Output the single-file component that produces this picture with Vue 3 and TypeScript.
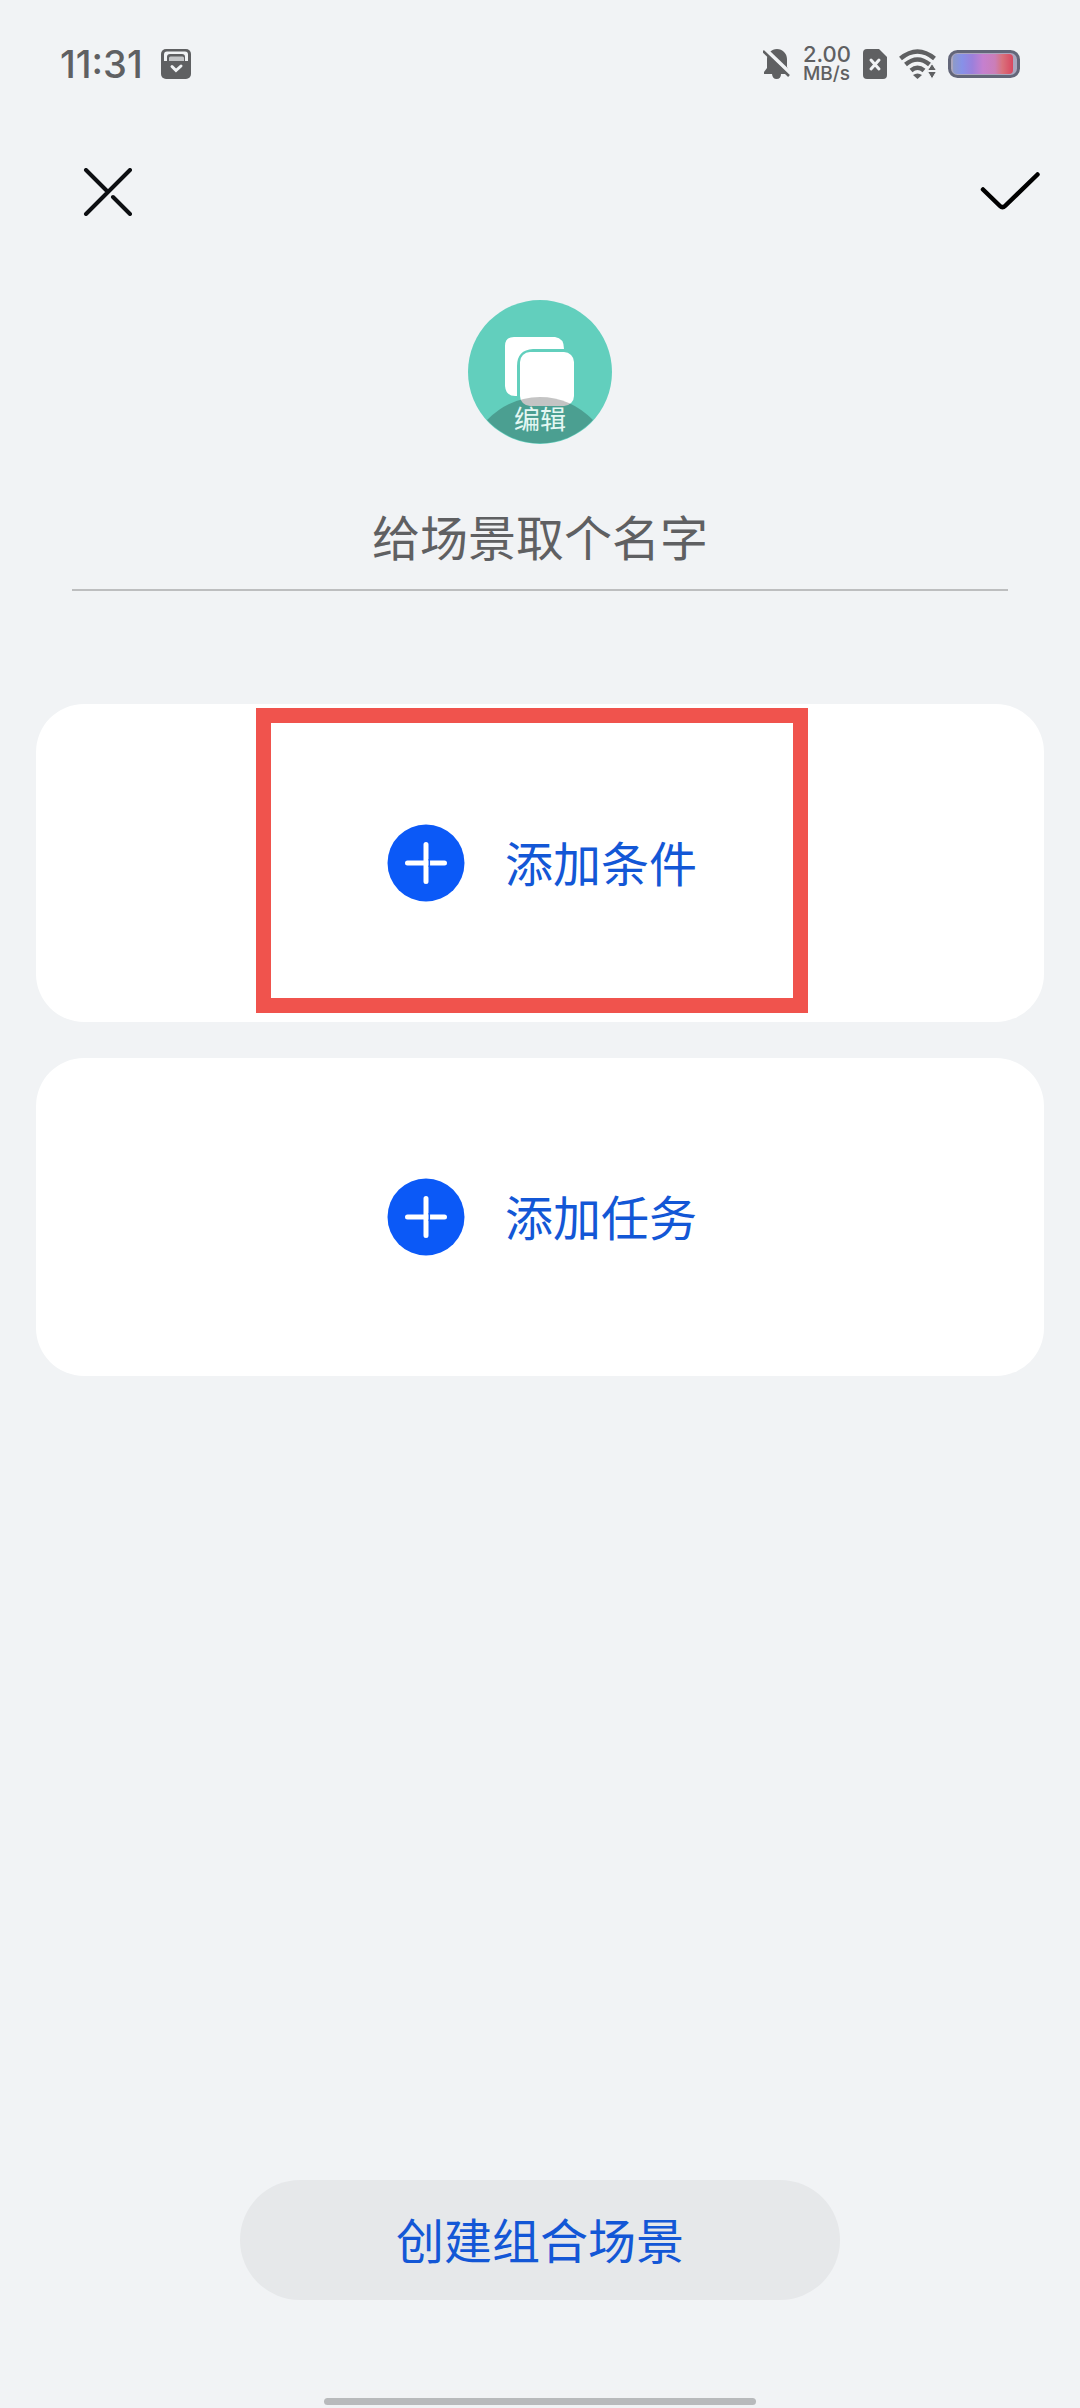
<script setup lang="ts">
import { ref } from 'vue'

interface AddCard {
  id: string
  label: string
  highlighted: boolean
}

const sceneName = ref('')
const cards: AddCard[] = [
  { id: 'condition', label: '添加条件', highlighted: true },
  { id: 'task', label: '添加任务', highlighted: false },
]
</script>

<template>
  <div class="screen">
    <div class="status">
      <div class="status-group wide">
        <span class="time">11:31</span>
        <svg viewBox="0 0 30 30" width="30" height="30" aria-hidden="true">
          <rect x="0" y="0" width="30" height="30" rx="5" fill="#5f6062" />
          <path d="M3 12V5.500Q3 2.500 6 2.500H24Q27 2.500 27 5.500V12H24V8Q24 5 21 5H9Q6 5 6 8V12Z" fill="#f1f3f5" />
          <path d="M8 12V9Q8 7.500 9.500 7.500H21.500Q23 7.500 23 9V12Z" fill="#c3c5c7" />
          <path d="M11 17.500L15 21.500L20 17" fill="none" stroke="#f1f3f5" stroke-width="3" stroke-linecap="round" />
        </svg>
      </div>
      <div class="status-group">
        <svg viewBox="0 0 28 30" width="28" height="30" aria-hidden="true">
          <path d="M14 0C19.500 0 24 4.500 24 10V18L27 23V25H18Q18 30 13.500 30Q9.500 30 9 25H1V23L4 19V10C4 4.500 8.500 0 14 0Z" fill="#5f6062" />
          <path d="M2 0L28 25" stroke="#f1f3f5" stroke-width="4" />
          <path d="M0 2L26 27" stroke="#5f6062" stroke-width="2.500" />
        </svg>
        <span class="speed">
          <span class="speed-value">2.00</span>
          <span class="speed-unit">MB/s</span>
        </span>
        <svg viewBox="0 0 24 30" width="24" height="30" aria-hidden="true">
          <path d="M4 0H16L24 8V26Q24 30 20 30H4Q0 30 0 26V4Q0 0 4 0Z" fill="#5f6062" />
          <path d="M8 11L16 20M16 11L8 20" stroke="#f1f3f5" stroke-width="3" stroke-linecap="round" />
        </svg>
        <svg viewBox="0 0 37 30" width="37" height="30" aria-hidden="true">
          <g fill="none" stroke="#5f6062" stroke-width="4.500">
            <path d="M1.500 9.500Q18.500-4.500 35.500 9.500" />
            <path d="M6.500 15.500Q18.500 5.500 30.500 15.500" />
            <path d="M12 21.500Q18.500 16 25 21.500" />
          </g>
          <path d="M14 26Q18.500 23 23 26L18.500 30Z" fill="#5f6062" />
          <path d="M33 14.500L37.500 21.500H28.500ZM28.500 22.500H37.500L33 30Z" fill="#5f6062" stroke="#f1f3f5" stroke-width="1" />
        </svg>
        <svg viewBox="0 0 72 28" width="72" height="28" aria-hidden="true">
          <defs>
            <linearGradient id="charge">
              <stop offset="0" stop-color="#8d9bc8" />
              <stop offset=".15" stop-color="#8791e8" />
              <stop offset=".32" stop-color="#9b80dc" />
              <stop offset=".5" stop-color="#c580cf" />
              <stop offset=".7" stop-color="#cb7eb8" />
              <stop offset=".82" stop-color="#d9727d" />
              <stop offset="1" stop-color="#d9475f" />
            </linearGradient>
          </defs>
          <rect x="1.500" y="1.500" width="69" height="25" rx="8" fill="#aaa5bd" stroke="#636679" stroke-width="3" />
          <rect x="5" y="4" width="60" height="20" rx="4" fill="url(#charge)" />
        </svg>
      </div>
    </div>

    <header class="toolbar">
      <button class="tool" type="button" aria-label="关闭">
        <svg viewBox="0 0 60 48" width="60" height="48" aria-hidden="true">
          <path d="M8 2L29 23M35 29L52 46M52 2L8 46" fill="none" stroke="#0d0f12" stroke-width="4" stroke-linecap="round" />
        </svg>
      </button>
      <button class="tool" type="button" aria-label="完成">
        <svg viewBox="0 0 60 48" width="60" height="48" aria-hidden="true">
          <path d="M3 21.500L20 38Q22.500 40.500 25 38L57.500 6.500" fill="none" stroke="#000" stroke-width="4.500" stroke-linecap="round" />
        </svg>
      </button>
    </header>

    <main class="content">
      <button class="avatar" type="button">
        <svg viewBox="0 0 144 144" width="144" height="144" aria-hidden="true">
          <circle cx="72" cy="72" r="72" fill="#62cfbd" />
          <path d="M46 37H87Q96 38 96 49H65Q49 50 49 66V96Q38 97 37 86V46Q37 37 46 37Z" fill="#fff" />
          <rect x="52" y="52" width="54" height="54" rx="10" fill="#fff" />
          <path d="M19 120Q42 97 72 97Q102 97 125 120A72 72 0 0 1 19 120Z" fill="#000" fill-opacity=".23" />
        </svg>
        <span class="avatar-label">编辑</span>
      </button>

      <input v-model="sceneName" class="name" type="text" placeholder="给场景取个名字" aria-label="给场景取个名字" />

      <div class="cards">
        <button v-for="card in cards" :key="card.id" class="card" type="button">
          <svg viewBox="0 0 78 78" width="78" height="78" aria-hidden="true">
            <circle cx="39" cy="39" r="38.500" fill="#0b59f7" />
            <path d="M39 20.500V57.500M20.500 39H57.500" stroke="#fff" stroke-width="5" stroke-linecap="round" />
            <path d="M42.300 35V43" stroke="#0b59f7" stroke-width="1.500" />
          </svg>
          <span class="card-label">{{ card.label }}</span>
          <span v-if="card.highlighted" class="highlight"></span>
        </button>
      </div>
    </main>

    <footer class="footer">
      <button class="combine" type="button">创建组合场景</button>
      <div class="home-bar"></div>
    </footer>
  </div>
</template>

<style>
body {
  background: #f1f3f5;
}
</style>

<style scoped>
.screen,
.screen * {
  box-sizing: border-box;
}

.screen {
  display: flex;
  flex-direction: column;
  min-height: 100vh;
  background: #f1f3f5;
  font-family: "Noto Sans CJK SC", sans-serif;
}

button {
  margin: 0;
  padding: 0;
  border: 0;
  background: none;
  font-family: inherit;
  cursor: pointer;
}

svg {
  display: block;
  flex: none;
}

.status {
  display: flex;
  align-items: center;
  justify-content: space-between;
  height: 128px;
  padding: 0 60px;
  color: #5f6062;
  font-family: Inter, "Noto Sans CJK SC", sans-serif;
  font-weight: 500;
}

.status-group {
  display: flex;
  align-items: center;
  gap: 12px;
}

.wide {
  gap: 18px;
}

.time {
  font-size: 38px;
  line-height: 48px;
}

.speed {
  display: flex;
  flex-direction: column;
}

.speed-value {
  font-size: 22px;
  line-height: 20px;
}

.speed-unit {
  font-size: 19px;
  line-height: 20px;
}

.toolbar {
  display: flex;
  align-items: center;
  justify-content: space-between;
  height: 128px;
  padding: 0 40px 0 78px;
}

.content {
  display: flex;
  flex-direction: column;
  align-items: center;
  padding: 44px 36px 0;
}

.avatar {
  position: relative;
  width: 144px;
  height: 144px;
  border-radius: 50%;
}

.avatar-label {
  position: absolute;
  right: 0;
  bottom: 10px;
  left: 0;
  color: #e4f7f3;
  font-size: 26px;
  line-height: 32px;
  text-align: center;
}

.name {
  align-self: stretch;
  height: 103px;
  margin: 44px 36px 0;
  padding: 0 0 8px;
  border: 0;
  border-bottom: 2px solid #bdbebf;
  border-radius: 0;
  outline: 0;
  background: none;
  color: #1a1a1a;
  font-family: inherit;
  font-size: 48px;
  text-align: center;
}

.name::placeholder {
  color: #5f6062;
  opacity: 1;
}

.cards {
  display: flex;
  flex-direction: column;
  gap: 36px;
  align-self: stretch;
  margin-top: 113px;
}

.card {
  position: relative;
  display: flex;
  align-items: center;
  justify-content: center;
  gap: 40px;
  height: 318px;
  padding-left: 4px;
  border-radius: 48px;
  background: #fff;
  color: #1357d6;
  font-size: 48px;
  line-height: 72px;
}

.card-label {
  padding-bottom: 4px;
}

.highlight {
  position: absolute;
  top: 4px;
  right: 236px;
  bottom: 9px;
  left: 220px;
  border: 15px solid #f0534d;
}

.footer {
  display: flex;
  flex-direction: column;
  align-items: center;
  gap: 98px;
  margin-top: auto;
  padding: 48px 0 3px;
}

.combine {
  width: 600px;
  max-width: 100%;
  height: 120px;
  padding-bottom: 4px;
  border-radius: 60px;
  background: #e6e8ea;
  color: #1357d6;
  font-size: 48px;
  line-height: 72px;
}

.home-bar {
  width: 40%;
  height: 7px;
  border-radius: 4px;
  background: #b8babc;
}
</style>
